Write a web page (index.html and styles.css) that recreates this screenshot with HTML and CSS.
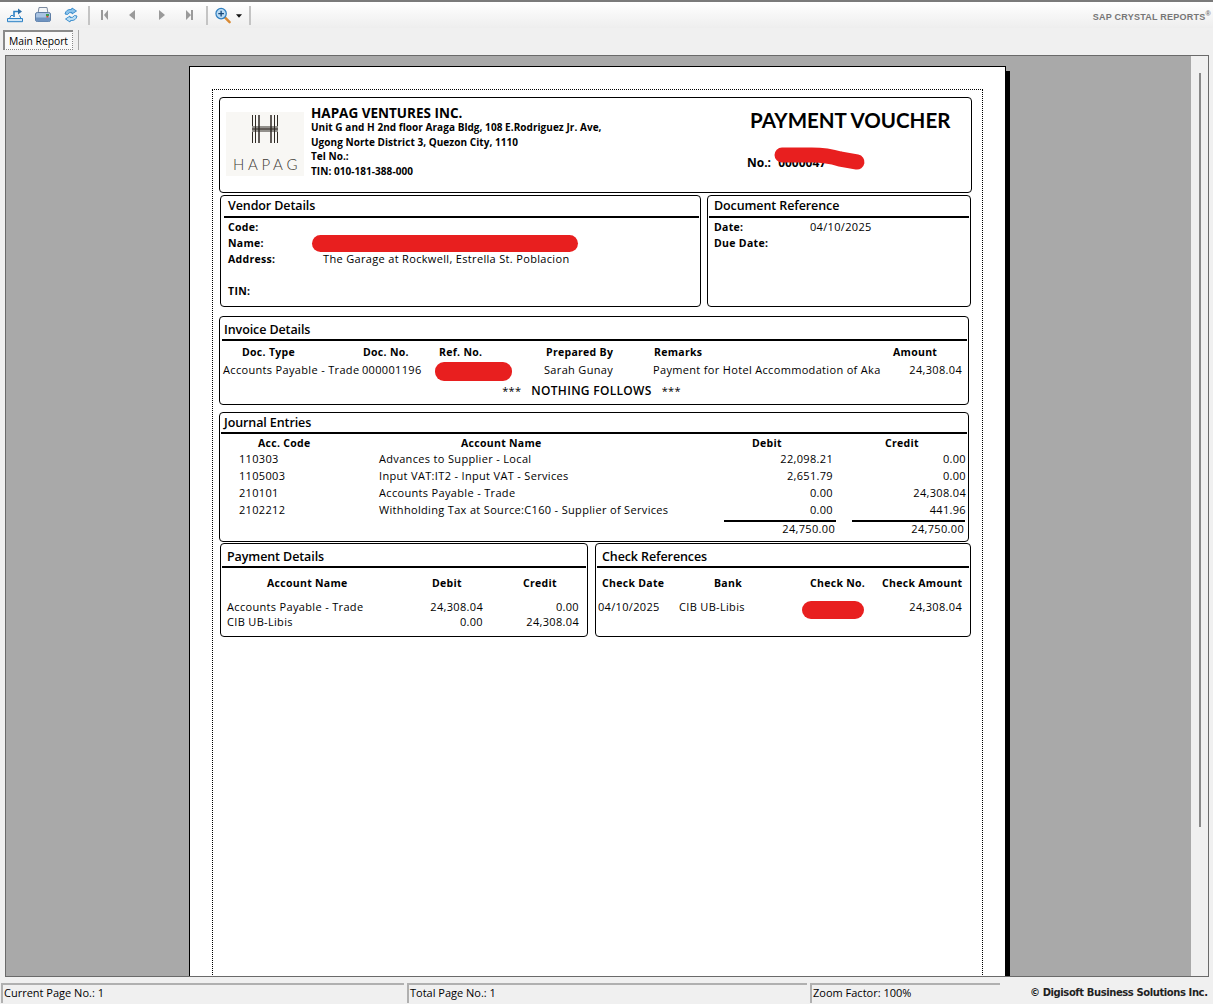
FILE: index.html
```html
<!DOCTYPE html>
<html lang="en">
<head>
<meta charset="utf-8">
<title>Payment Voucher</title>
<link rel="stylesheet" href="styles.css">
</head>
<body>
<div class="app">
  <header class="toolbar">
    <svg class="ico first" width="18" height="18" viewBox="0 0 18 18"><path d="M1.500 12.500h15v3.200h-15z" fill="#cfe5f6" stroke="#2d82c6"/><path d="M3.500 12.500 5 9.500h2M13.500 9.500l1.500 3" fill="none" stroke="#2d82c6"/><path d="M8 11V5.500h4.500" fill="none" stroke="#2d82c6" stroke-width="1.600"/><path d="M12 2.500l4 3-4 3z" fill="#2d6fa8"/></svg>
    <svg class="ico" width="18" height="18" viewBox="0 0 18 18"><path d="M5 1.500h8l1 6H4z" fill="#f4f6f8" stroke="#7c8aa0"/><path d="M1.500 8q0-1.500 2-1.500h11q2 0 2 1.500v6q0 1.500-2 1.500h-11q-2 0-2-1.500z" fill="#a9c3e2" stroke="#5f7ea6"/><path d="M2 11.500h14v3q0 1-2 1H4q-2 0-2-1z" fill="#6f93c0"/><rect x="12" y="8" width="3" height="2" fill="#3e9a4c"/><rect x="12.400" y="10" width="2" height="1.500" fill="#d24a2a"/></svg>
    <svg class="ico" width="16" height="18" viewBox="0 0 16 18"><path d="M2 8q1-5 6.500-4.500L9 2l4.500 3L9 8V6.500Q6 6 4.500 8.500z" fill="#8cc4ec" stroke="#2f86c8" stroke-width=".9"/><path d="M14 10q-1 5-6.500 4.500L7 16l-4.500-3L7 10v1.500q3 .5 4.500-2z" fill="#bcdff5" stroke="#2f86c8" stroke-width=".9"/></svg>
    <span class="sep sep-a"></span>
    <svg class="nav n1" width="10" height="12" viewBox="0 0 10 12"><path d="M1 1h2v10H1zM8 1v10L4 6z" fill="#9a9a9a"/></svg>
    <svg class="nav n2" width="10" height="12" viewBox="0 0 10 12"><path d="M8 1v10L2 6z" fill="#9a9a9a"/></svg>
    <svg class="nav n3" width="10" height="12" viewBox="0 0 10 12"><path d="M2 1v10l6-5z" fill="#9a9a9a"/></svg>
    <svg class="nav n4" width="10" height="12" viewBox="0 0 10 12"><path d="M2 1v10l5-5zM7 1h2v10H7z" fill="#9a9a9a"/></svg>
    <span class="sep sep-b"></span>
    <svg class="zoom" width="16" height="17" viewBox="0 0 17 17"><path d="M10 10l5.500 5.500" stroke="#d98a34" stroke-width="2.600" stroke-linecap="round"/><circle cx="6.500" cy="6.500" r="5.500" fill="#bcdcf4" stroke="#2f7fc0" stroke-width="1.300"/><path d="M6.500 3.500v6M3.500 6.500h6" stroke="#17497a" stroke-width="1.400"/></svg>
    <svg class="caret" width="6" height="4" viewBox="0 0 7 4"><path d="M0 0h7L3.500 4z" fill="#111"/></svg>
    <span class="sep sep-c"></span>
    <span class="brand">SAP CRYSTAL REPORTS<sup>®</sup></span>
  </header>

  <nav class="tabs">
    <span class="tab">Main Report</span>
    <span class="tab-sep"></span>
  </nav>

  <main class="viewer">
    <div class="canvas">
      <div class="page">
        <div class="report">

          <section class="box head-box">
            <div class="logo">
              <svg width="28" height="28" viewBox="0 0 28 28"><g stroke="#2f2a24" stroke-width="1" fill="none"><path d="M1.500 0v11M4.500 0v28M1.500 17v11M23.500 0v28M26.500 0v11M26.500 17v11M1 12h26M1 16h26"/><path d="M8 0v28M20 0v28M1 14h26" stroke-width="1.500"/></g></svg>
              <span class="logo-name">HAPAG</span>
            </div>
            <div class="company">
              <h1>HAPAG VENTURES INC.</h1>
              <p>Unit G and H 2nd floor Araga Bldg, 108 E.Rodriguez Jr. Ave,</p>
              <p>Ugong Norte District 3, Quezon City, 1110</p>
              <p>Tel No.:</p>
              <p>TIN: 010-181-388-000</p>
            </div>
            <div class="voucher">
              <h2>PAYMENT VOUCHER</h2>
              <p class="no">No.: 0000047</p>
              <svg class="redact-no" width="96" height="28" viewBox="0 0 96 28"><path d="M10 9H40Q55 9 68 13L85 16" fill="none" stroke="#e81f1f" stroke-width="15" stroke-linecap="round" stroke-linejoin="round"/></svg>
            </div>
          </section>

          <div class="pair pair-top">
            <section class="box vendor">
              <h3 class="title">Vendor Details</h3>
              <div class="kv">
                <b>Code:</b><span></span>
                <b>Name:</b><span class="redact r-name"></span>
                <b>Address:</b><span>The Garage at Rockwell, Estrella St. Poblacion</span>
                <b></b><span></span>
                <b>TIN:</b><span></span>
              </div>
            </section>
            <section class="box docref">
              <h3 class="title">Document Reference</h3>
              <div class="kv kv-doc">
                <b>Date:</b><span>04/10/2025</span>
                <b>Due Date:</b><span></span>
              </div>
            </section>
          </div>

          <section class="box invoice">
            <h3 class="title">Invoice Details</h3>
            <div class="inv-grid inv-head">
              <b>Doc. Type</b><b>Doc. No.</b><b>Ref. No.</b><b>Prepared By</b><b>Remarks</b><b>Amount</b>
            </div>
            <div class="inv-grid inv-row">
              <span>Accounts Payable - Trade</span><span>000001196</span><span class="redact r-ref"></span><span>Sarah Gunay</span><span>Payment for Hotel Accommodation of Aka</span><span class="num">24,308.04</span>
            </div>
            <div class="nothing"><span>***</span><b>NOTHING FOLLOWS</b><span>***</span></div>
          </section>

          <section class="box journal">
            <h3 class="title">Journal Entries</h3>
            <div class="j-grid j-head"><b>Acc. Code</b><b>Account Name</b><b>Debit</b><b>Credit</b></div>
            <div class="j-grid j-row"><span>110303</span><span>Advances to Supplier - Local</span><span class="num">22,098.21</span><span class="num">0.00</span></div>
            <div class="j-grid j-row"><span>1105003</span><span>Input VAT:IT2 - Input VAT - Services</span><span class="num">2,651.79</span><span class="num">0.00</span></div>
            <div class="j-grid j-row"><span>210101</span><span>Accounts Payable - Trade</span><span class="num">0.00</span><span class="num">24,308.04</span></div>
            <div class="j-grid j-row"><span>2102212</span><span>Withholding Tax at Source:C160 - Supplier of Services</span><span class="num">0.00</span><span class="num">441.96</span></div>
            <div class="totals"><span>24,750.00</span><span>24,750.00</span></div>
          </section>

          <div class="pair pair-bottom">
            <section class="box payment">
              <h3 class="title">Payment Details</h3>
              <div class="p-grid p-head"><b>Account Name</b><b>Debit</b><b>Credit</b></div>
              <div class="p-grid p-row p-first"><span>Accounts Payable - Trade</span><span class="num">24,308.04</span><span class="num">0.00</span></div>
              <div class="p-grid p-row"><span>CIB UB-Libis</span><span class="num">0.00</span><span class="num">24,308.04</span></div>
            </section>
            <section class="box check">
              <h3 class="title">Check References</h3>
              <div class="c-grid c-head"><b>Check Date</b><b>Bank</b><b>Check No.</b><b>Check Amount</b></div>
              <div class="c-grid c-row"><span>04/10/2025</span><span>CIB UB-Libis</span><span class="redact r-check"></span><span class="num">24,308.04</span></div>
            </section>
          </div>

        </div>
      </div>
    </div>
    <aside class="scroll"><span class="thumb"></span></aside>
  </main>

  <footer class="status">
    <span class="panel p1">Current Page No.: 1</span>
    <span class="panel p2">Total Page No.: 1</span>
    <span class="panel p3">Zoom Factor: 100%</span>
    <span class="copy">© Digisoft Business Solutions Inc.</span>
  </footer>
</div>
</body>
</html>
```
FILE: styles.css
```css
* { box-sizing: border-box; }
html, body { margin: 0; height: 100%; overflow: hidden; }
body { background: #f0f0f0; font-family: "Open Sans", "Liberation Sans", sans-serif; color: #000; }
h1, h2, h3, p { margin: 0; }

.app { width: 1213px; height: 1004px; display: flex; flex-direction: column; }

/* toolbar */
.toolbar { height: 28px; flex: none; border-top: 2px solid #7a7a7a; background: linear-gradient(#fff, #eeeeee); display: flex; align-items: center; padding-left: 6px; }
.ico { margin-right: 11px; flex: none; }
.ico.first { margin-right: 10px; }
.sep { width: 2px; height: 19px; background: #c4c4c4; flex: none; }
.sep-a { margin: 0 10px 0 -2px; }
.nav { flex: none; }
.n1 { margin-right: 17px; }
.n2 { margin-right: 20px; }
.n3 { margin-right: 17px; }
.n4 { margin-right: 12px; }
.sep-b { margin-right: 7px; }
.zoom { flex: none; margin-right: 5px; }
.caret { flex: none; margin-right: 7px; margin-top: 2px; }
.brand { margin-left: auto; margin-right: 2px; font: bold 9px "Liberation Sans", sans-serif; color: #767676; letter-spacing: .25px; margin-top: 4px; white-space: nowrap; }
.brand sup { font-size: 7px; line-height: 0; }

/* tabs */
.tabs { height: 27px; flex: none; display: flex; align-items: flex-start; padding: 2px 0 0 3px; }
.tab { width: 70px; height: 20px; background: #fafafa; border: 1px dotted #888; border-top: 2px solid #8a8a8a; border-left: 2px solid #8a8a8a; font-size: 10.300px; line-height: 18px; color: #000; text-align: center; white-space: nowrap; }
.tab-sep { width: 1px; height: 20px; background: #a8a8a8; margin-left: 5px; }

/* viewer */
.viewer { height: 922px; flex: none; margin: 0 4px 0 5px; border: 1px solid #6a6a6a; display: flex; overflow: hidden; }
.canvas { flex: 1; background: #a9a9a9; padding: 10px 0 0 183px; overflow: hidden; }
.scroll { width: 17px; flex: none; background: #f0f0f0; padding-top: 17px; display: flex; justify-content: center; }
.thumb { width: 2px; height: 754px; background: #888; }

.page { width: 817px; height: 1000px; background: #fff; border: 1px solid #000; box-shadow: 4px 5px 0 #000; padding: 22px 0 0 22px; }
.report { width: 771px; height: 960px; border: 1px dotted #000; padding: 7px 0 0 6px; display: flex; flex-direction: column; font-size: 11px; letter-spacing: .33px; }

.box { border: 1px solid #000; border-radius: 4px; flex: none; }
.title { font-size: 12.500px; font-weight: 600; line-height: 19px; letter-spacing: -.1px; white-space: nowrap; }
.title::after { content: ""; display: block; height: 2px; background: #000; }

b { font-weight: 700; font-size: 10.500px; letter-spacing: .3px; white-space: nowrap; }
span { white-space: nowrap; }
.num { text-align: right; }
.redact { background: #e81f1f; border-radius: 9px; display: block; }

/* header */
.head-box { height: 96px; width: 753px; display: flex; padding: 14px 0 0 6px; }
.logo { width: 78px; height: 64px; background: #f8f7f4; flex: none; display: flex; flex-direction: column; align-items: center; padding-top: 3px; }
.logo-name { font: 300 15px/16px Lato, sans-serif; letter-spacing: 3.700px; color: #3e3a34; margin-top: 13px; margin-right: -4px; }
.company { margin: -6px 0 0 7px; width: 400px; letter-spacing: 0; }
.company h1 { font: 700 13.500px/14px "Open Sans", sans-serif; letter-spacing: 0; white-space: nowrap; }
.company p { font: 700 10px/14.500px "Open Sans", sans-serif; letter-spacing: .05px; white-space: nowrap; }
.voucher { margin: -5px 0 0 36px; position: relative; width: 220px; letter-spacing: 0; }
.voucher h2 { font: 700 20.500px/26px Lato, sans-serif; margin-left: 3px; white-space: nowrap; }
.no { font: 700 12px/16px "Open Sans", sans-serif; margin-top: 22px; word-spacing: 4px; white-space: nowrap; }
.redact-no { position: absolute; left: 25px; top: 39px; }

.pair { display: flex; }
.pair-top { margin-top: 2px; padding-left: 1px; height: 112px; flex: none; }
.vendor { width: 481px; padding: 0 1px 0 3px; }
.vendor .title { margin-top: 1px; text-indent: 4px; line-height: 17px; }
.docref { width: 264px; margin-left: 6px; padding: 0 1px; }
.docref .title { margin-top: 1px; text-indent: 5px; line-height: 17px; }
.vendor .title::after, .docref .title::after { margin-top: 2px; }
.kv { display: grid; grid-template-columns: 95px 1fr; grid-auto-rows: 16px; padding: 1px 0 0 4px; line-height: 16px; }
.kv-doc { grid-template-columns: 96px 1fr; padding-left: 5px; }
.r-name { width: 266px; height: 17px; margin-left: -11px; }

/* invoice */
.invoice { width: 750px; height: 89px; margin-top: 9px; padding: 3px 1px 0 2px; }
.invoice .title { text-indent: 2px; }
.inv-grid { display: grid; grid-template-columns: 139px 77px 106px 109px 239px 1fr; }
.inv-head { line-height: 17px; padding-top: 3px; }
.inv-head b:nth-child(1) { padding-left: 20px; }
.inv-head b:nth-child(2) { padding-left: 2px; }
.inv-head b:nth-child(3) { padding-left: 1px; }
.inv-head b:nth-child(4) { padding-left: 2px; }
.inv-head b:nth-child(5) { padding-left: 1px; }
.inv-head b:nth-child(6) { padding-left: 1px; }
.inv-row { line-height: 18px; height: 20px; padding: 0 5px 0 1px; }
.r-ref { width: 77px; height: 19px; margin: 1px 0 0 -4px; }
.inv-row span:nth-child(4), .inv-row span:nth-child(5) { margin-left: -1px; }
.nothing { display: flex; justify-content: center; gap: 10px; line-height: 18px; margin: 1px 0 0 -6px; }
.nothing b { font-size: 12px; font-weight: 600; letter-spacing: .3px; }

/* journal */
.journal { width: 750px; height: 130px; margin-top: 7px; padding: 0 1px; }
.journal .title { text-indent: 3px; }
.j-grid { display: grid; grid-template-columns: 158px 342px 112px 133px; }
.j-head { line-height: 13px; padding-top: 3px; }
.j-head b:nth-child(1) { padding-left: 37px; }
.j-head b:nth-child(2) { padding-left: 82px; }
.j-head b:nth-child(3) { padding-left: 31px; }
.j-head b:nth-child(4) { padding-left: 52px; }
.j-row { line-height: 17px; }
.j-row span:first-child { padding-left: 18px; }
.totals { display: grid; grid-template-columns: 112px 113px; column-gap: 16px; margin: 2px 0 0 503px; }
.totals span { border-top: 2px solid #000; text-align: right; line-height: 14px; padding-right: 1px; }

/* bottom pair */
.pair-bottom { padding-left: 1px; margin-top: 1px; flex: none; }
.pair-bottom .box { height: 94px; }
.payment { width: 368px; padding: 0 1px; }
.payment .title { text-indent: 5px; margin-top: 3px; }
.check { width: 376px; margin-left: 7px; padding: 0 1px; }
.check .title { text-indent: 5px; margin-top: 3px; }
.p-grid { display: grid; grid-template-columns: 199px 57px 96px; padding-left: 5px; }
.p-head { line-height: 16px; padding-top: 7px; }
.p-head b:nth-child(1) { padding-left: 40px; }
.p-head b:nth-child(2) { padding-left: 6px; }
.p-head b:nth-child(3) { padding-left: 40px; }
.p-row { line-height: 15px; }
.p-first { margin-top: 8px; }
.c-grid { display: grid; grid-template-columns: 81px 123px 76px 1fr; }
.c-head { line-height: 16px; padding-top: 7px; padding-left: 5px; }
.c-head b:nth-child(2) { padding-left: 31px; }
.c-head b:nth-child(3) { padding-left: 4px; }
.c-row { line-height: 15px; margin-top: 8px; padding: 0 7px 0 1px; grid-template-columns: 81px 123px 86px 1fr; }
.r-check { width: 62px; height: 18px; margin-top: 2px; }

/* status */
.status { flex: 1; display: flex; padding: 6px 0 0 1px; font-size: 11px; line-height: 16px; }
.panel { flex: none; height: 20px; background: #f0f0f0; border-top: 2px solid #b0b0b0; border-left: 2px solid #b0b0b0; padding-left: 1px; }
.p1 { width: 403px; }
.p2 { width: 400px; margin-left: 3px; }
.p3 { width: 190px; margin-left: 3px; }
.copy { margin: 2px 0 0 30px; font: 700 10px/16px "DejaVu Sans", sans-serif; letter-spacing: -.41px; color: #222; white-space: nowrap; }
```
